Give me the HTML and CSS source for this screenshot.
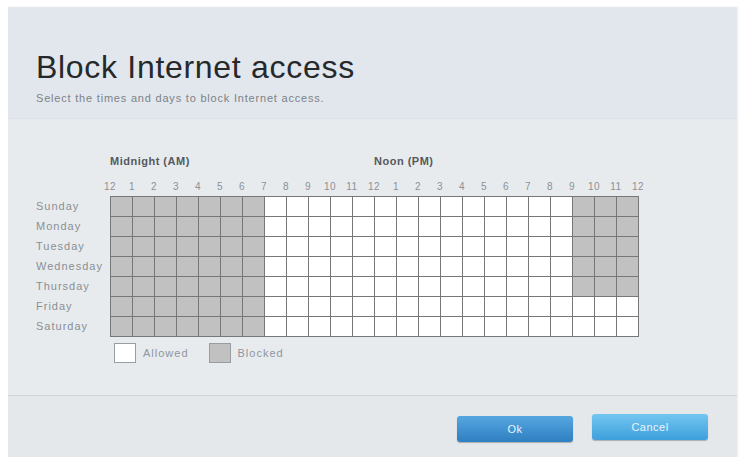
FILE: index.html
```html
<!DOCTYPE html>
<html lang="en">
<head>
    <meta charset="UTF-8">
    <title>Block Internet access</title>
    <link rel="stylesheet" href="styles.css">
</head>
<body>
<div class="dialog">
    <div class="dialog-header">
        <h1>Block Internet access</h1>
        <p class="subtitle">Select the times and days to block Internet access.</p>
    </div>

    <div class="dialog-body">
        <div class="period-labels">
            <span class="period am">Midnight (AM)</span>
            <span class="period">Noon (PM)</span>
        </div>
        <div class="hours" id="hours"></div>
        <div class="schedule">
            <div class="days">
                <div class="day">Sunday</div>
                <div class="day">Monday</div>
                <div class="day">Tuesday</div>
                <div class="day">Wednesday</div>
                <div class="day">Thursday</div>
                <div class="day">Friday</div>
                <div class="day">Saturday</div>
            </div>
            <div class="grid" id="grid"></div>
        </div>
        <div class="legend">
            <span class="swatch"></span><span class="legend-text">Allowed</span>
            <span class="swatch blocked"></span><span class="legend-text">Blocked</span>
        </div>
    </div>

    <div class="dialog-footer">
        <button class="btn btn-ok">Ok</button>
        <button class="btn btn-cancel">Cancel</button>
    </div>
</div>

<script>
    const hours = document.getElementById("hours");
    const grid = document.getElementById("grid");
    const labels = [12, 1, 2, 3, 4, 5, 6, 7, 8, 9, 10, 11, 12, 1, 2, 3, 4, 5, 6, 7, 8, 9, 10, 11, 12];

    labels.forEach(h => {
        const s = document.createElement("span");
        s.textContent = h;
        hours.appendChild(s);
    });

    // blocked: midnight-7am every day, 9pm-midnight Sunday to Thursday
    for (let day = 0; day < 7; day++) {
        for (let hour = 0; hour < 24; hour++) {
            const cell = document.createElement("div");
            cell.className = "cell";
            if (hour < 7 || (hour >= 21 && day < 5)) {
                cell.classList.add("blocked");
            }
            grid.appendChild(cell);
        }
    }
</script>
</body>
</html>
```

FILE: styles.css
```css
body {
    margin: 0;
    background-color: #ffffff;
    font-family: "Liberation Sans", Arial, sans-serif;
}

.dialog {
    margin: 7px 3px 0 8px;
    width: 729px;
    background-color: #e8ebee;
    box-shadow: 1px 0 2px rgba(0,0,0,0.08);
}

.dialog-header {
    height: 112px;
    padding: 42px 0 0 28px;
    box-sizing: border-box;
    background-color: #e1e7ed;
    border-bottom: 1px solid #dbe1e6;
}

h1 {
    margin: 0;
    font-size: 32px;
    line-height: 37px;
    font-weight: normal;
    letter-spacing: 0.7px;
    color: #26292c;
}

.subtitle {
    margin: 6px 0 0 0;
    font-size: 11px;
    line-height: 13px;
    letter-spacing: 0.8px;
    color: #7d8388;
}

.dialog-body {
    height: 277px;
    padding: 36px 0 0 28px;
    box-sizing: border-box;
    border-bottom: 1px solid #cfd4d8;
}

.period-labels {
    display: flex;
    padding-left: 74px;
}

.period {
    font-size: 11px;
    line-height: 13px;
    font-weight: bold;
    letter-spacing: 0.5px;
    color: #55595d;
}

.period.am {
    width: 264px;
}

.hours {
    display: flex;
    margin-top: 13px;
    padding-left: 63px;
}

.hours span {
    width: 22px;
    text-align: center;
    font-size: 10px;
    line-height: 12px;
    letter-spacing: 0.5px;
    color: #8c9094;
}

.schedule {
    display: flex;
    margin-top: 3px;
}

.days {
    width: 74px;
    padding-top: 1px;
}

.day {
    height: 20px;
    line-height: 19px;
    font-size: 11px;
    letter-spacing: 1px;
    color: #8a8f94;
}

.grid {
    display: grid;
    grid-template-columns: repeat(24, 21px);
    grid-auto-rows: 19px;
    gap: 1px;
    padding: 1px;
    background-color: #75787a;
}

.cell {
    background-color: #ffffff;
}

.cell.blocked {
    background-color: #c1c1c2;
}

.legend {
    display: flex;
    align-items: center;
    margin: 6px 0 0 78px;
}

.swatch {
    width: 20px;
    height: 18px;
    background-color: #ffffff;
    border: 1px solid #9a9da0;
}

.swatch.blocked {
    background-color: #c1c1c2;
    margin-left: 20px;
}

.legend-text {
    margin-left: 7px;
    font-size: 11px;
    letter-spacing: 1px;
    color: #8d96a0;
}

.dialog-footer {
    display: flex;
    justify-content: flex-end;
    align-items: flex-start;
    gap: 19px;
    height: 61px;
    padding: 18px 29px 0 0;
    box-sizing: border-box;
    background-color: #e4e8eb;
}

.btn {
    width: 116px;
    height: 26px;
    border: none;
    border-radius: 3px;
    font-family: "Liberation Sans", Arial, sans-serif;
    font-size: 11px;
    letter-spacing: 0.5px;
    color: #eaf5ff;
    box-shadow: 0 1px 1px rgba(0,0,0,0.25);
}

.btn-ok {
    margin-top: 2px;
    background: linear-gradient(#55a6e0, #2f7fc2);
}

.btn-cancel {
    background: linear-gradient(#74c6f0, #3d9fdc);
}
```
